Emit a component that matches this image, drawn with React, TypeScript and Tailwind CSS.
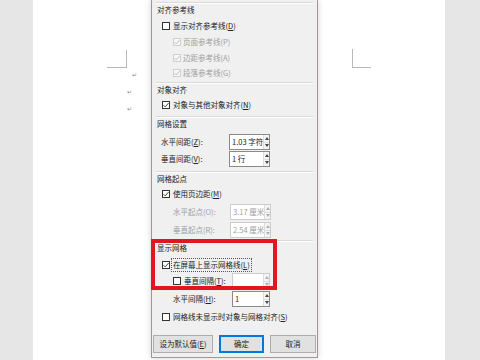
import React from 'react';

const FONT = { fontFamily: '"Noto Sans CJK SC", "Noto Sans", sans-serif' };

/* ── small pieces ─────────────────────────────── */
function Check({ on, off }: { on?: boolean; off?: boolean }) {
  return (
    <span
      className={`relative flex-none w-[8px] h-[8px] border ${
        off ? 'border-[#cfcfcf] bg-[#f7f7f7]' : 'border-[#333333] bg-white'
      }`}
    >
      {on && (
        <svg viewBox="0 0 8 8" className="absolute -left-px -top-px w-[8px] h-[8px]">
          <path
            d="M1.5 4.2 L3.2 5.9 L6.6 2"
            fill="none"
            stroke={off ? '#b5b5b5' : '#333333'}
            strokeWidth="0.9"
          />
        </svg>
      )}
    </span>
  );
}

function Key({ k }: { k: string }) {
  return (
    <>
      (<span className="underline">{k}</span>)
    </>
  );
}

function Spin({ off }: { off?: boolean }) {
  const c = off ? '#b0b0b0' : '#444444';
  return (
    <span className="flex flex-col w-[6px] h-full border-l border-[#dcdcdc] bg-[#f4f4f4]">
      <span className="flex-1 flex items-center justify-center border-b border-[#dcdcdc]">
        <svg viewBox="0 0 4 3" className="w-[4px] h-[3px]">
          <path d="M2 0 L4 3 L0 3 Z" fill={c} />
        </svg>
      </span>
      <span className="flex-1 flex items-center justify-center">
        <svg viewBox="0 0 4 3" className="w-[4px] h-[3px]">
          <path d="M0 0 L4 0 L2 3 Z" fill={c} />
        </svg>
      </span>
    </span>
  );
}

function Field({ value, w, off }: { value: string; w: string; off?: boolean }) {
  return (
    <span
      className={`flex h-[16px] ${w} border ${
        off ? 'border-[#cccccc] text-[#a0a0a0]' : 'border-[#8a8a8a] text-[#222]'
      } bg-white`}
    >
      <span className="flex-1 flex items-center pl-[2px] whitespace-nowrap overflow-hidden">{value}</span>
      <Spin off={off} />
    </span>
  );
}

function Header({ text, mt }: { text: string; mt: string }) {
  return (
    <div
      className={`${mt} mx-1 h-[14px] border-t border-[#dadada] shadow-[inset_0_1px_0_#ffffff] flex items-center pl-[1px] text-[#222]`}
    >
      {text}
    </div>
  );
}

/* ── page ─────────────────────────────────────── */
export default function App() {
  return (
    <div className="relative w-[480px] h-[360px] overflow-hidden flex bg-white text-[7.5px] leading-none" style={FONT}>
      <div className="w-[33px] bg-[#e6e6e6]" />
      <div className="relative flex-1 bg-white">
        {/* corner marks */}
        <div className="absolute left-[74px] top-[50px] w-[20px] h-[18px] border-r border-b border-[#b8b8b8]" />
        <div className="absolute left-[319px] top-[49px] w-[19px] h-[19px] border-l border-b border-[#b8b8b8]" />
        {/* paragraph marks */}
        <span className="absolute left-[99px] top-[72px] text-[6px] text-[#8a8a8a]">↵</span>
        <span className="absolute left-[94px] top-[89px] text-[6px] text-[#8a8a8a]">↵</span>
        <span className="absolute left-[94px] top-[106px] text-[6px] text-[#8a8a8a]">↵</span>
      </div>
      <div className="w-[35px] bg-[#e6e6e6]" />

      {/* dialog */}
      <div className="absolute left-[151px] top-0 w-[167px] h-[358px] bg-[#f0f0f0] border-x border-b border-[#a8939a] shadow-[0_0_6px_rgba(0,0,0,0.18)] flex flex-col text-[#222]">
        <Header text="对齐参考线" mt="mt-[2px]" />
        <div className="mt-[2px] h-[16px] flex items-center pl-[10px]">
          <Check />
          <span className="ml-[3px]">显示对齐参考线<Key k="D" /></span>
        </div>
        <div className="h-[16px] flex items-center pl-[21px] text-[#a0a0a0]">
          <Check on off />
          <span className="ml-[2px]">页面参考线(P)</span>
        </div>
        <div className="h-[15px] flex items-center pl-[21px] text-[#a0a0a0]">
          <Check on off />
          <span className="ml-[2px]">边距参考线(A)</span>
        </div>
        <div className="h-[15px] flex items-center pl-[21px] text-[#a0a0a0]">
          <Check on off />
          <span className="ml-[2px]">段落参考线(G)</span>
        </div>

        <Header text="对象对齐" mt="mt-[2px]" />
        <div className="mt-[1px] h-[16px] flex items-center pl-[10px]">
          <Check on />
          <span className="ml-[3px]">对象与其他对象对齐<Key k="N" /></span>
        </div>

        <Header text="网格设置" mt="mt-[3px]" />
        <div className="mt-[4px] h-[16px] flex items-center pl-[9px]">
          <span className="w-[68px]">水平间距<Key k="Z" />:</span>
          <Field value="1.03 字符" w="w-[41px]" />
        </div>
        <div className="mt-[1px] h-[16px] flex items-center pl-[9px]">
          <span className="w-[68px]">垂直间距<Key k="V" />:</span>
          <Field value="1 行" w="w-[41px]" />
        </div>

        <Header text="网格起点" mt="mt-[4px]" />
        <div className="mt-[1px] h-[16px] flex items-center pl-[10px]">
          <Check on />
          <span className="ml-[3px]">使用页边距<Key k="M" /></span>
        </div>
        <div className="mt-[2px] h-[16px] flex items-center pl-[21px] text-[#a0a0a0]">
          <span className="w-[57px]">水平起点(O):</span>
          <Field value="3.17 厘米" w="w-[41px]" off />
        </div>
        <div className="mt-[2px] h-[16px] flex items-center pl-[21px] text-[#a0a0a0]">
          <span className="w-[57px]">垂直起点(R):</span>
          <Field value="2.54 厘米" w="w-[41px]" off />
        </div>

        <Header text="显示网格" mt="mt-[2px]" />
        <div className="mt-[3px] h-[16px] flex items-center pl-[10px]">
          <Check on />
          <span className="ml-[2px] px-[1px] py-[2px] outline outline-1 outline-dotted outline-[#555]">
            在屏幕上显示网格线<Key k="L" />
          </span>
        </div>
        <div className="mt-[1px] h-[14px] flex items-center pl-[21px]">
          <span className="w-[59px] flex items-center">
            <Check />
            <span className="ml-[3px]">垂直间隔<Key k="T" />:</span>
          </span>
          <Field value="" w="w-[38px]" off />
        </div>
        <div className="mt-[3px] h-[16px] flex items-center pl-[21px]">
          <span className="w-[59px]">水平间隔<Key k="H" />:</span>
          <Field value="1" w="w-[38px]" />
        </div>
        <div className="mt-[2px] h-[16px] flex items-center pl-[10px]">
          <Check />
          <span className="ml-[3px]">网格线未显示时对象与网格对齐<Key k="S" /></span>
        </div>

        <div className="mt-[10px] h-[18px] flex pl-[1px] gap-[6px]">
          <button className="w-[60px] h-full border border-[#adadad] bg-[#e1e1e1] text-[7.5px]">
            设为默认值<Key k="E" />
          </button>
          <button className="w-[45px] h-full border-2 border-[#0078d7] bg-[#e1e1e1] text-[7.5px]">确定</button>
          <button className="w-[46px] h-full border border-[#adadad] bg-[#e1e1e1] text-[7.5px]">取消</button>
        </div>

        {/* red highlight */}
        <div className="absolute left-[-1px] top-[239px] w-[126px] h-[51px] border-4 border-[#e3161d]" />
      </div>
    </div>
  );
}
